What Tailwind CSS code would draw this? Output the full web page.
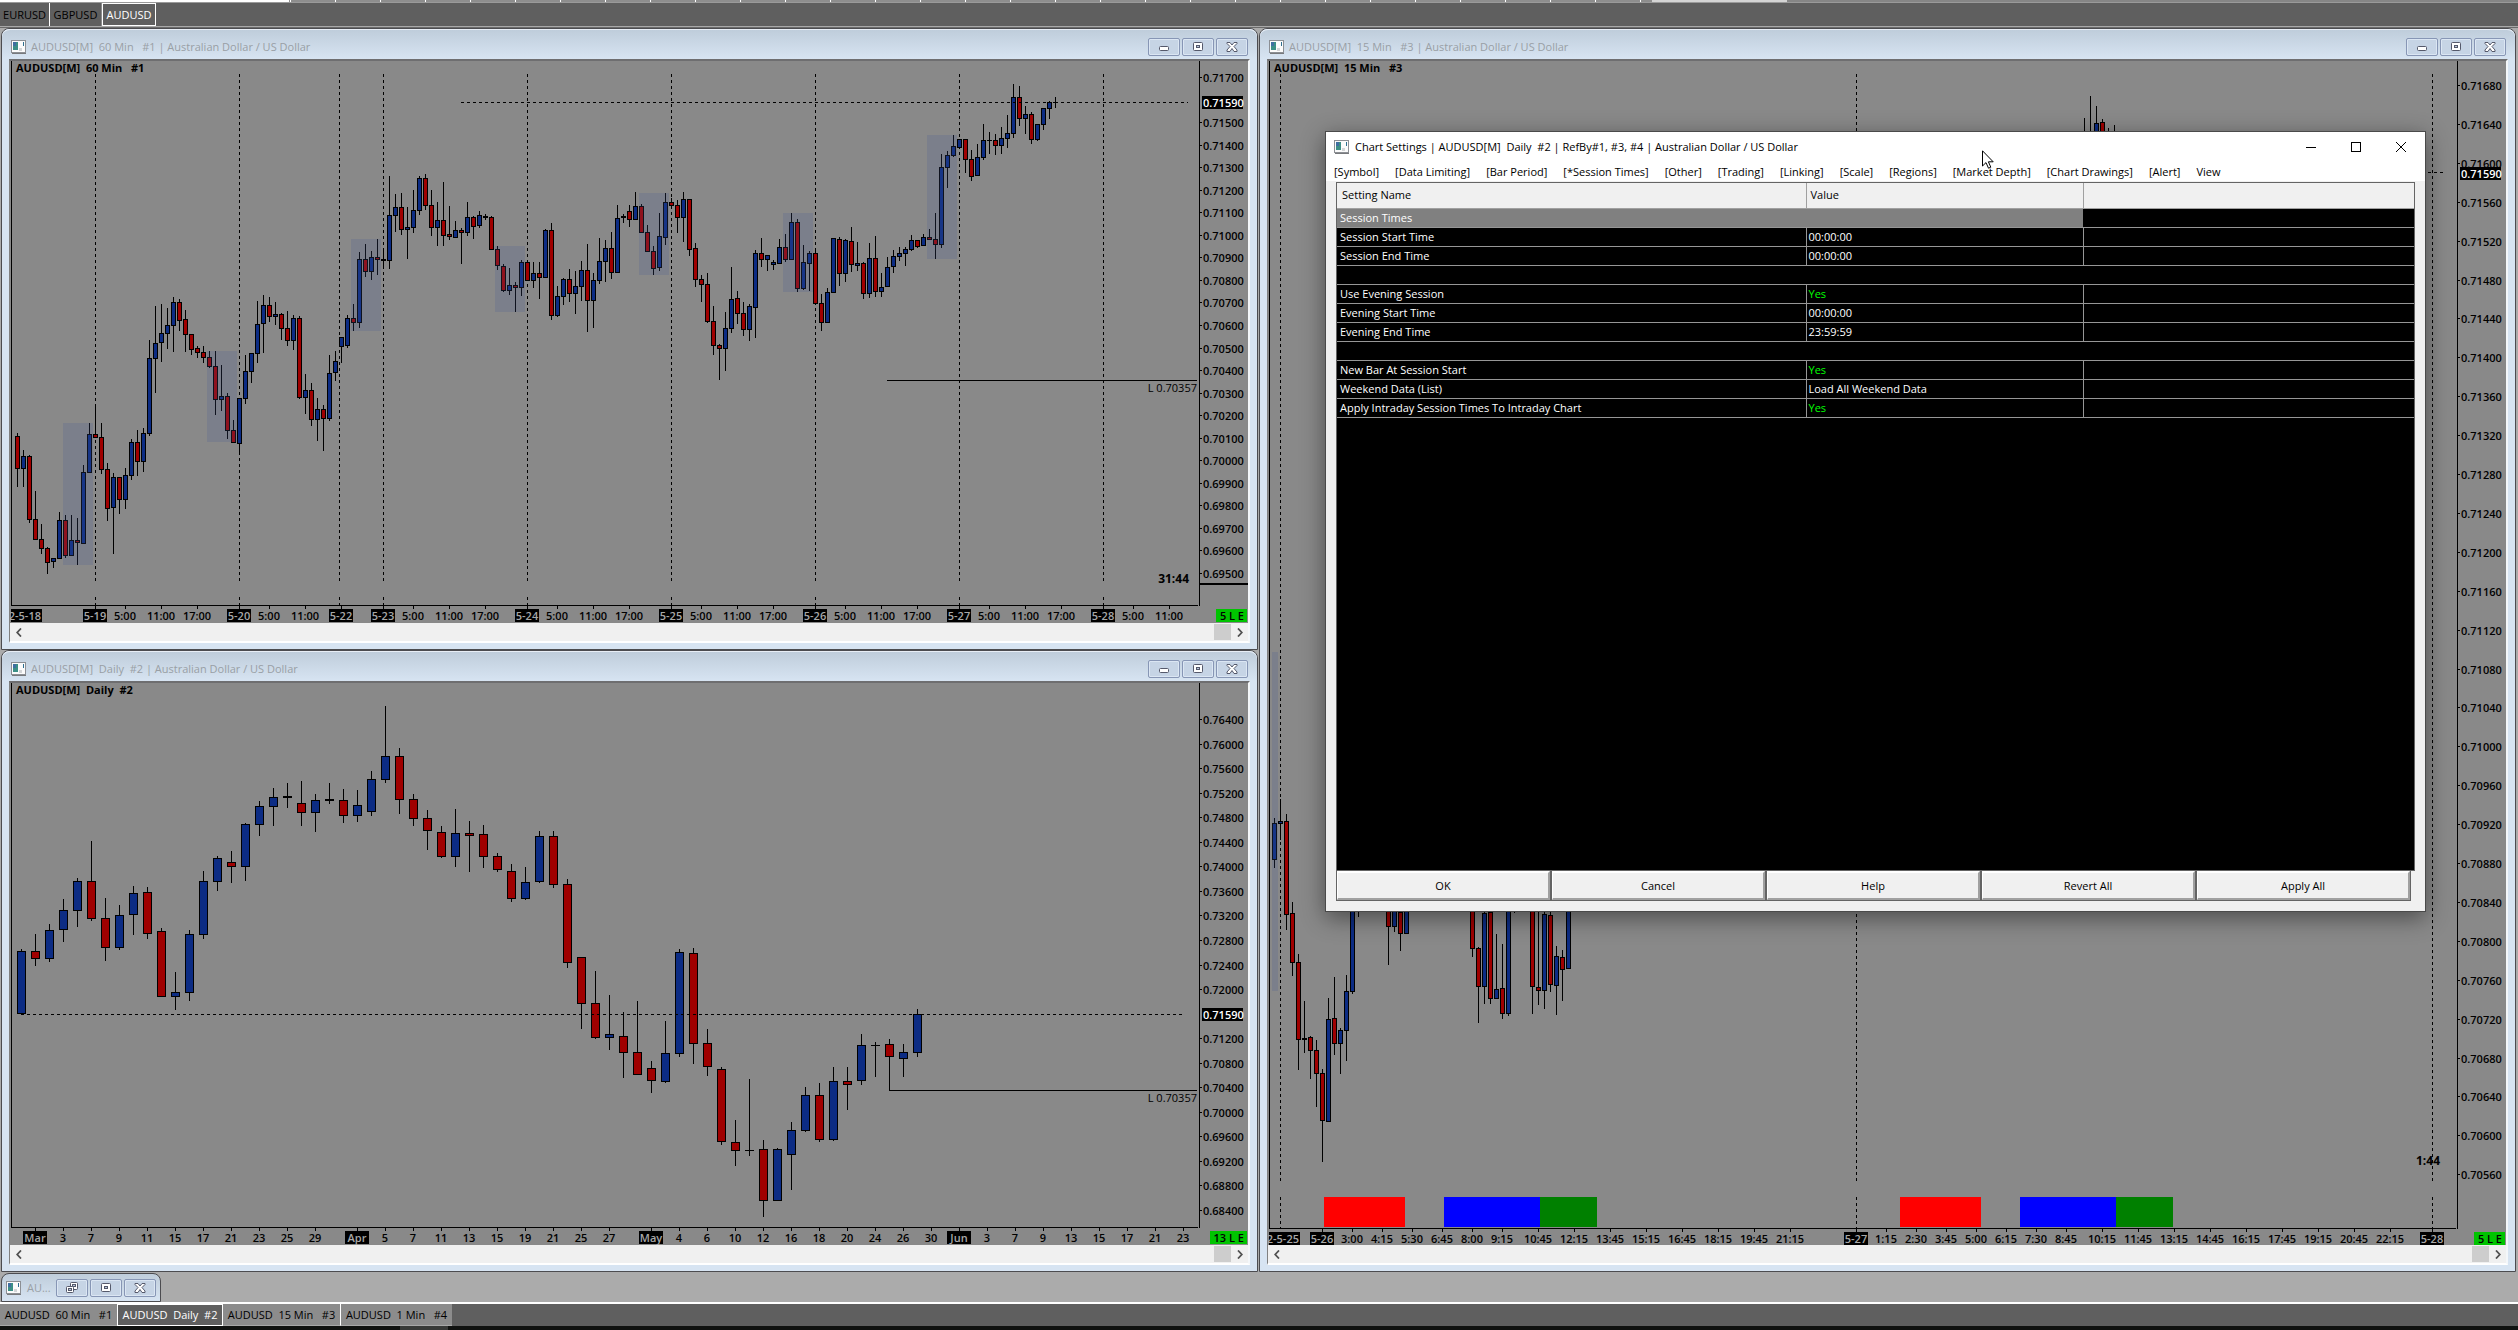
<!DOCTYPE html>
<html lang="en">
<head>
<meta charset="utf-8">
<title>AUDUSD charts</title>
<script src="https://cdn.jsdelivr.net/npm/@tailwindcss/browser@4"></script>
</head>
<body class="relative flex h-screen flex-col overflow-hidden bg-[#ababab] font-['Open_Sans','Noto_Sans',sans-serif] text-[11px] leading-4 text-black">

<svg class="hidden" aria-hidden="true">
  <symbol id="app" viewBox="0 0 15 14">
    <rect x="0.5" y="0.5" width="14" height="12" fill="#fbfbfb" stroke="#8c8f94"/>
    <rect x="1" y="13" width="14" height="1" fill="#77797c"/>
    <rect x="2" y="2" width="5" height="8" fill="#3c8f86"/><rect x="2" y="2" width="3" height="4" fill="#3f6fa0"/>
    <rect x="8" y="8" width="3" height="3" fill="#d4d6d8"/><rect x="12" y="2" width="1" height="4" fill="#2f6f90"/>
  </symbol>
  <symbol id="min" viewBox="0 0 12 10"><rect x="1.5" y="4.5" width="9" height="4" rx="1" fill="#fff" stroke="#55596b"/></symbol>
  <symbol id="max" viewBox="0 0 12 10"><rect x="1.5" y="0.5" width="9" height="8" rx="1" fill="#fff" stroke="#55596b"/><rect x="4.5" y="3.5" width="3" height="2" fill="#b8c6dc" stroke="#55596b"/></symbol>
  <symbol id="restore" viewBox="0 0 12 12"><rect x="4.5" y="0.5" width="7" height="7" rx="1" fill="#fff" stroke="#55596b"/><rect x="6.5" y="2.5" width="3" height="2" fill="#b8c6dc" stroke="#55596b"/><rect x="0.5" y="4.5" width="7" height="6" rx="1" fill="#fff" stroke="#55596b"/><rect x="2.5" y="6.5" width="3" height="2" fill="#b8c6dc" stroke="#55596b"/></symbol>
  <symbol id="close" viewBox="0 0 12 10"><path d="M1 .5H4L6 3L8 .5H11V1.5L8 4.5L11 8V9.5H8L6 6.5L4 9.5H1V8L4 4.5L1 1.5Z" fill="#fff" stroke="#55596b"/></symbol>
  <symbol id="left" viewBox="0 0 6 9"><path d="M5 .5L1.2 4.5L5 8.5" fill="none" stroke="#505050" stroke-width="1.8"/></symbol>
  <symbol id="right" viewBox="0 0 6 9"><path d="M1 .5L4.8 4.5L1 8.5" fill="none" stroke="#505050" stroke-width="1.8"/></symbol>
</svg>

<div class="flex h-[3px] shrink-0 border-b border-[#9a9a9a] bg-[#868686]">
  <div class="w-[289px] bg-white"></div>
  <div class="w-[1363px] bg-[repeating-linear-gradient(90deg,#8e8e8e_0_1px,#fff_1px_2px,#8e8e8e_2px_45px)]"></div>
  <div class="w-[135px] bg-[#d4d4d4]"></div>
</div>

<nav class="flex h-[23px] shrink-0 items-stretch bg-[#5f5f5f]" aria-label="Workspaces">
  <button class="w-[50px] border-r border-white">EURUSD</button>
  <button class="w-[52px] border-r border-[#8c8c8c]">GBPUSD</button>
  <button class="w-[54px] border border-white text-white">AUDUSD</button>
</nav>
<div class="h-0.5 shrink-0 border-t border-[#a8a8a8] bg-[#6a6a6a]"></div>

<main class="grid min-h-0 flex-1 grid-cols-2 gap-px pr-0.5 pb-[30px] pl-px">
  <div class="flex min-h-0 min-w-0 flex-col">
    <section class="win flex min-h-0 flex-1 flex-col rounded-t-lg border border-[#4c4c50] bg-[#d7e4f2]" data-chart="h1" data-title="AUDUSD[M]  60 Min   #1"></section>
    <section class="win flex min-h-0 flex-1 flex-col rounded-t-lg border border-[#4c4c50] bg-[#d7e4f2]" data-chart="d1" data-title="AUDUSD[M]  Daily  #2"></section>
  </div>
  <section class="win flex min-h-0 min-w-0 flex-col rounded-t-lg border border-[#4c4c50] bg-[#d7e4f2]" data-chart="m15" data-title="AUDUSD[M]  15 Min   #3"></section>
</main>

<template id="window">
  <header class="flex h-[30px] shrink-0 items-center rounded-t-lg border-t border-[#e8eef6] bg-linear-to-b from-[#bfcddb] to-[#d7e4f2] pt-1 pr-[9px] pl-[9px]">
    <svg class="h-3.5 w-[15px] shrink-0"><use href="#app"/></svg>
    <h2 class="title ml-[5px] flex-1 whitespace-pre text-[#999fa5]"></h2>
    <div class="flex gap-0.5">
      <button aria-label="Minimize" class="flex h-[18px] w-8 items-center justify-center rounded-xs border border-[#8796b5] bg-[#c6d4e5] inset-ring inset-ring-[#dbe6f3]"><svg class="h-2.5 w-3"><use href="#min"/></svg></button>
      <button aria-label="Maximize" class="flex h-[18px] w-8 items-center justify-center rounded-xs border border-[#8796b5] bg-[#c6d4e5] inset-ring inset-ring-[#dbe6f3]"><svg class="h-2.5 w-3"><use href="#max"/></svg></button>
      <button aria-label="Close" class="flex h-[18px] w-8 items-center justify-center rounded-xs border border-[#8796b5] bg-[#c6d4e5] inset-ring inset-ring-[#dbe6f3]"><svg class="h-2.5 w-3"><use href="#close"/></svg></button>
    </div>
  </header>
  <div class="mr-[7px] mb-1.5 ml-[7px] flex min-h-0 flex-1 flex-col border-t-2 border-r-2 border-b-2 border-l border-t-[#6e6e70] border-r-[#f4f7fa] border-b-white border-l-[#808080]">
    <div class="flex min-h-0 flex-1 bg-[#898989]">
      <svg class="plot h-full min-w-0 flex-1" shape-rendering="crispEdges" role="img"></svg>
      <svg class="prices h-full w-[50px] shrink-0" shape-rendering="crispEdges"></svg>
    </div>
    <div class="flex h-[18px] shrink-0 items-center bg-[#f0f0f0] pr-[5px] pl-1.5">
      <button aria-label="Scroll left"><svg class="h-[9px] w-1.5"><use href="#left"/></svg></button>
      <div class="ml-auto h-4 w-[17px] bg-[#cdcdcd]"></div>
      <button aria-label="Scroll right" class="ml-1.5"><svg class="h-[9px] w-1.5"><use href="#right"/></svg></button>
    </div>
  </div>
</template>

<!-- minimized window -->
<div class="absolute bottom-7 left-px flex h-[29px] w-40 items-center rounded-t-lg border border-[#4c4c50] bg-linear-to-b from-[#bfcddb] to-[#d7e4f2] pr-1 pl-1">
  <svg class="h-3.5 w-[15px] shrink-0"><use href="#app"/></svg>
  <span class="ml-1.5 flex-1 text-[#999fa5]">AU...</span>
  <div class="flex gap-0.5">
    <button aria-label="Restore" class="flex h-[18px] w-8 items-center justify-center rounded-xs border border-[#8796b5] bg-[#c6d4e5] inset-ring inset-ring-[#dbe6f3]"><svg class="h-3 w-3"><use href="#restore"/></svg></button>
    <button aria-label="Maximize" class="flex h-[18px] w-8 items-center justify-center rounded-xs border border-[#8796b5] bg-[#c6d4e5] inset-ring inset-ring-[#dbe6f3]"><svg class="h-2.5 w-3"><use href="#max"/></svg></button>
    <button aria-label="Close" class="flex h-[18px] w-8 items-center justify-center rounded-xs border border-[#8796b5] bg-[#c6d4e5] inset-ring inset-ring-[#dbe6f3]"><svg class="h-2.5 w-3"><use href="#close"/></svg></button>
  </div>
</div>

<nav class="flex h-6 shrink-0 items-stretch border-t-2 border-white bg-[#5f5f5f]" aria-label="Charts">
  <button class="w-[117px] border-b border-[#a8a8a8] bg-[#8c8c8c] whitespace-pre">AUDUSD  60 Min   #1</button>
  <button class="w-[106px] border border-white whitespace-pre text-white">AUDUSD  Daily  #2</button>
  <button class="w-[117px] border-b border-[#a8a8a8] bg-[#8c8c8c] whitespace-pre">AUDUSD  15 Min   #3</button>
  <button class="w-28 border-b border-l border-b-[#a8a8a8] border-l-white bg-[#8c8c8c] whitespace-pre">AUDUSD  1 Min   #4</button>
</nav>
<div class="h-1 shrink-0 bg-[#101210]"><div class="ml-[400px] h-full w-12 bg-[#383a38]"></div></div>

<!-- settings dialog -->
<div role="dialog" aria-labelledby="dlg" class="absolute top-[131px] right-[92px] left-[1325px] flex h-[781px] flex-col border border-[#4a4a4a] bg-[#f0f0f0] shadow-[0_6px_22px_rgba(0,0,0,0.45)]">
  <div class="flex h-[30px] shrink-0 items-center bg-white pr-0.5 pl-2">
    <svg class="h-3.5 w-[15px]"><use href="#app"/></svg>
    <h1 id="dlg" class="ml-1.5 flex-1 whitespace-pre">Chart Settings | AUDUSD[M]  Daily  #2 | RefBy#1, #3, #4 | Australian Dollar / US Dollar</h1>
    <button aria-label="Minimize" class="flex h-full w-[45px] items-center justify-center"><svg class="h-3 w-3" viewBox="0 0 12 12"><path d="M1 6.5H11" stroke="#000"/></svg></button>
    <button aria-label="Maximize" class="flex h-full w-[45px] items-center justify-center"><svg class="h-3 w-3" viewBox="0 0 12 12"><rect x="1.5" y="1.5" width="9" height="9" fill="none" stroke="#000"/></svg></button>
    <button aria-label="Close" class="flex h-full w-[45px] items-center justify-center"><svg class="h-3 w-3" viewBox="0 0 12 12"><path d="M1 1L11 11M11 1L1 11" stroke="#000"/></svg></button>
  </div>
  <nav class="flex h-[19px] shrink-0 items-center gap-4 bg-white pl-2 whitespace-nowrap" aria-label="Settings pages">
    <a href="#">[Symbol]</a><a href="#">[Data Limiting]</a><a href="#">[Bar Period]</a><a href="#">[*Session Times]</a><a href="#">[Other]</a><a href="#">[Trading]</a><a href="#">[Linking]</a><a href="#">[Scale]</a><a href="#">[Regions]</a><a href="#">[Market Depth]</a><a href="#">[Chart Drawings]</a><a href="#">[Alert]</a><a href="#">View</a>
  </nav>
  <div class="mt-px mr-2.5 ml-2.5 min-h-0 flex-1 border border-[#646464] bg-black">
    <table class="w-full table-fixed border-collapse text-left text-white">
      <colgroup><col class="w-[469px]"><col class="w-[277px]"><col></colgroup>
      <thead><tr class="h-[25px] border-b border-[#a0a0a0] bg-[#f0f0f0] text-black"><th class="border-r border-[#a0a0a0] pl-[5px] font-normal">Setting Name</th><th class="border-r border-[#a0a0a0] pl-1 font-normal">Value</th><th></th></tr></thead>
      <tbody>
        <tr class="h-[19px] border-b border-[#969696]"><td colspan="2" class="bg-[#808080] pl-[3px]">Session Times</td><td></td></tr>
        <tr class="h-[19px] border-b border-[#969696]"><td class="border-r border-[#969696] pl-[3px]">Session Start Time</td><td class="border-r border-[#969696] pl-0.5">00:00:00</td><td></td></tr>
        <tr class="h-[19px] border-b border-[#969696]"><td class="border-r border-[#969696] pl-[3px]">Session End Time</td><td class="border-r border-[#969696] pl-0.5">00:00:00</td><td></td></tr>
        <tr class="h-[19px] border-b border-[#969696]"><td colspan="3"></td></tr>
        <tr class="h-[19px] border-b border-[#969696]"><td class="border-r border-[#969696] pl-[3px]">Use Evening Session</td><td class="border-r border-[#969696] pl-0.5 text-[#00ff00]">Yes</td><td></td></tr>
        <tr class="h-[19px] border-b border-[#969696]"><td class="border-r border-[#969696] pl-[3px]">Evening Start Time</td><td class="border-r border-[#969696] pl-0.5">00:00:00</td><td></td></tr>
        <tr class="h-[19px] border-b border-[#969696]"><td class="border-r border-[#969696] pl-[3px]">Evening End Time</td><td class="border-r border-[#969696] pl-0.5">23:59:59</td><td></td></tr>
        <tr class="h-[19px] border-b border-[#969696]"><td colspan="3"></td></tr>
        <tr class="h-[19px] border-b border-[#969696]"><td class="border-r border-[#969696] pl-[3px]">New Bar At Session Start</td><td class="border-r border-[#969696] pl-0.5 text-[#00ff00]">Yes</td><td></td></tr>
        <tr class="h-[19px] border-b border-[#969696]"><td class="border-r border-[#969696] pl-[3px]">Weekend Data (List)</td><td class="border-r border-[#969696] pl-0.5">Load All Weekend Data</td><td></td></tr>
        <tr class="h-[19px] border-b border-[#969696]"><td class="border-r border-[#969696] pl-[3px]">Apply Intraday Session Times To Intraday Chart</td><td class="border-r border-[#969696] pl-0.5 text-[#00ff00]">Yes</td><td></td></tr>
      </tbody>
    </table>
  </div>
  <div class="mr-3.5 mb-2.5 ml-2.5 grid h-[30px] shrink-0 grid-cols-5 gap-0.5 border border-t-0 border-[#646464] bg-[#646464]">
    <button class="border border-t-2 border-r-2 border-b-2 border-t-white border-r-[#a0a0a0] border-b-[#a0a0a0] border-l-white bg-[#f0f0f0]">OK</button>
    <button class="border border-t-2 border-r-2 border-b-2 border-t-white border-r-[#a0a0a0] border-b-[#a0a0a0] border-l-white bg-[#f0f0f0]">Cancel</button>
    <button class="border border-t-2 border-r-2 border-b-2 border-t-white border-r-[#a0a0a0] border-b-[#a0a0a0] border-l-white bg-[#f0f0f0]">Help</button>
    <button class="border border-t-2 border-r-2 border-b-2 border-t-white border-r-[#a0a0a0] border-b-[#a0a0a0] border-l-white bg-[#f0f0f0]">Revert All</button>
    <button class="border border-t-2 border-r-2 border-b-2 border-t-white border-r-[#a0a0a0] border-b-[#a0a0a0] border-l-white bg-[#f0f0f0]">Apply All</button>
  </div>
</div>

<!-- pointer -->
<svg class="absolute top-[150px] left-[1982px] h-[19px] w-3" viewBox="0 0 12 19" aria-hidden="true"><path d="M.5 .8V16L4 12.6L6.5 18.2L8.8 17.2L6.4 11.8H11.2Z" fill="#fff" stroke="#000"/></svg>

<script>
// Bars are "high top bottom low colour"; B = up, R = down, D = doji.
const bars = {
h1: `1299 1308 1406 1460 R,1350 1368 1406 1460 B,1365 1368 1559 1568 R,1473 1557 1619 1619 R,1572 1617 1646 1661 R,1641 1644 1688 1721 R,1674 1674 1685 1703 B,1536 1560 1676 1676 B,1546 1560 1667 1673 R,1546 1620 1667 1667 B,1554 1620 1628 1695 R,1395 1416 1631 1631 B,1269 1302 1418 1418 B,1212 1302 1313 1313 R,1269 1311 1409 1421 R,1389 1407 1526 1562 R,1419 1431 1523 1661 B,1431 1431 1499 1541 R,1404 1425 1499 1526 B,1317 1326 1427 1439 B,1290 1326 1385 1427 R,1284 1299 1385 1415 B,1020 1074 1301 1307 B,917 1029 1076 1178 B,912 999 1028 1085 B,924 975 1001 1046 B,891 905 977 1055 B,897 906 962 993 R,930 957 1004 1055 R,1002 1002 1049 1064 R,1038 1044 1058 1073 R,1038 1056 1073 1088 R,1053 1071 1100 1103 R,1053 1098 1199 1244 R,1095 1188 1199 1232 B,1179 1188 1292 1316 R,1260 1290 1328 1328 R,1194 1194 1331 1364 B,1065 1113 1196 1211 B,1059 1059 1115 1148 B,903 972 1061 1088 B,885 915 973 1058 B,891 915 950 965 R,906 942 950 974 B,938 942 986 1019 R,932 984 1022 1037 R,945 954 1022 1049 B,947 954 1193 1196 R,1122 1170 1193 1241 B,1149 1170 1259 1277 R,1194 1227 1259 1322 B,1215 1227 1256 1352 R,1065 1119 1256 1262 B,1053 1083 1118 1142 B,1011 1011 1040 1088 B,945 954 1037 1043 B,912 954 968 992 R,756 777 969 983 B,732 777 815 830 R,753 771 815 839 B,717 771 779 825 R,744 777 782 806 D,528 645 782 806 B,581 621 647 695 B,579 621 689 705 R,621 681 689 776 B,570 630 684 698 B,528 534 632 645 B,522 534 617 630 R,570 615 684 707 R,606 660 684 738 B,546 660 708 738 R,618 702 711 719 R,663 690 713 713 B,683 690 698 791 R,606 651 698 707 B,648 651 681 716 R,633 645 678 684 B,642 648 653 659 D,648 651 749 749 R,738 747 797 809 R,792 798 873 875 R,804 855 872 884 B,846 855 863 935 R,780 786 863 887 B,786 786 842 843 R,786 819 842 863 B,786 819 833 896 R,687 690 833 834 B,669 690 948 959 R,858 888 948 951 B,834 837 890 914 B,807 837 881 906 R,813 858 881 941 B,783 810 860 902 B,732 810 902 996 R,819 840 902 983 B,714 783 842 851 B,720 744 785 845 B,696 744 818 836 R,615 654 818 818 B,642 648 653 668 D,615 633 659 681 R,576 618 659 659 B,612 618 698 698 R,675 696 755 755 R,738 753 806 825 R,639 708 803 812 B,579 606 713 735 B,594 606 617 617 R,600 615 654 698 R,576 597 654 725 B,597 597 749 768 R,729 744 839 860 R,825 837 854 906 R,819 852 965 968 R,918 963 1037 1064 R,1032 1035 1046 1140 R,936 984 1046 1112 B,801 897 987 999 B,873 894 942 972 R,906 939 989 1007 R,912 918 989 1022 B,750 759 923 1013 B,714 759 779 800 R,765 765 779 812 B,780 786 794 809 B,717 741 792 792 B,702 741 779 785 R,639 666 779 780 B,657 666 866 875 R,735 786 866 869 B,753 759 792 872 B,744 759 911 911 R,882 909 968 992 R,864 876 968 968 B,714 714 878 878 B,711 717 822 857 R,717 720 822 845 B,681 723 794 815 R,726 789 797 812 B,786 789 881 896 R,729 774 881 893 B,708 774 875 890 R,819 861 875 890 B,771 801 860 860 B,750 768 800 818 B,741 759 770 782 B,741 747 762 797 B,705 720 749 752 B,720 720 740 743 R,702 711 738 738 B,687 711 719 719 R,639 717 734 776 R,462 501 734 743 B,453 465 503 563 B,405 438 467 471 B,417 417 443 443 B,417 417 479 518 R,450 477 530 542 R,432 471 527 527 B,372 420 473 479 B,396 420 423 462 D,402 420 437 464 R,381 414 437 461 B,345 399 416 443 B,252 291 401 413 B,258 291 356 377 R,318 342 356 401 B,336 342 419 431 R,372 372 419 422 B,324 324 374 389 B,303 306 326 356 B,291 306 309 324 D`,
d1: `897 903 1091 1091 B,852 903 926 948 R,822 840 926 936 B,747 780 839 876 B,684 693 782 831 B,573 693 806 812 R,744 804 893 933 R,765 795 893 900 B,708 729 794 855 B,711 726 851 866 R,834 843 1040 1040 R,966 1026 1040 1079 B,840 852 1028 1053 B,663 693 854 867 B,618 624 695 723 B,603 636 650 699 R,519 522 650 693 B,453 468 524 558 B,414 441 470 528 B,399 438 443 474 D,393 459 488 528 R,432 450 488 546 B,399 447 452 461 D,417 450 497 519 R,420 465 497 516 B,363 387 485 498 B,168 318 389 399 B,294 318 449 492 R,432 447 506 528 R,480 504 542 600 R,528 546 620 624 R,477 549 620 651 B,513 549 557 666 R,525 552 620 654 R,609 618 659 666 R,642 663 746 755 R,651 696 746 750 B,543 558 695 699 B,543 558 704 714 R,687 702 938 954 R,921 921 1061 1137 R,963 1059 1163 1167 R,1035 1152 1163 1200 B,1086 1158 1208 1284 R,1053 1207 1274 1274 R,1233 1254 1292 1329 R,1113 1209 1296 1298 B,897 906 1211 1221 B,894 909 1181 1242 R,1137 1179 1250 1278 R,1251 1257 1475 1485 R,1410 1476 1502 1548 R,1287 1500 1503 1518 D,1470 1497 1652 1700 R,1494 1497 1652 1652 B,1416 1440 1514 1620 B,1311 1335 1442 1446 B,1298 1335 1469 1475 R,1251 1293 1469 1473 B,1251 1293 1304 1380 R,1152 1185 1292 1305 B,1176 1185 1188 1281 D,1167 1182 1220 1321 R,1182 1206 1226 1281 B,1077 1092 1208 1220 B`,
m15: `818 823 860 868 B,799 821 824 840 B,814 821 915 930 R,902 913 963 976 R,954 962 1040 1070 R,1001 1038 1040 1053 D,1036 1037 1051 1079 R,1040 1050 1074 1107 R,1069 1073 1121 1162 R,998 1019 1122 1122 B,977 1018 1044 1055 R,1028 1030 1044 1074 B,975 991 1031 1061 B,880 890 992 994 B,870 890 892 917 D,,,,,880 890 927 965 R,880 890 927 932 B,880 912 934 951 R,880 890 934 934 B,,,,,,,,,,,880 890 949 957 R,947 948 987 1023 R,880 913 987 1004 B,880 912 999 1004 R,934 989 999 999 B,944 988 1014 1019 R,880 890 1014 1016 B,870 890 892 913 D,,,880 890 987 1014 R,880 987 991 1005 R,880 914 991 1009 B,880 915 985 992 R,946 956 986 1015 B,950 957 970 1001 R,880 890 969 969 B,${','.repeat(85)}118 140 142 150 D,96 140 142 150 D,106 123 150 150 B,119 122 150 150 R,128 140 142 150 D,125 140 142 150 D`
};
const run = (start, step, text) => text.split(' ').map((t, i) => [start + step * i, t]);
const charts = {
  h1: { x0: 10, y0: 61, px: 1198, first: 17, step: 6, body: 5, base: 0, unit: 3, axis: 605, cut: '2-5-18', badge: '5 L E', badgeW: 31,
    shade: [[63,423,30,142],[207,351,30,91],[351,239,30,92],[495,246,30,66],[639,193,30,82],[783,213,30,79],[927,135,30,124]],
    blocks: [], vert: [95,239,339,383,527,671,815,959,1103], vEnd: 581, vTail: 597,
    last: [461,1188,102], low: [887,380], clock: ['31:44',1189,583],
    days: [[95,'5-19'],[239,'5-20'],[341,'5-22'],[383,'5-23'],[527,'5-24'],[671,'5-25'],[815,'5-26'],[959,'5-27'],[1103,'5-28']],
    times: [[125,'5:00'],[161,'11:00'],[197,'17:00'],[269,'5:00'],[305,'11:00'],...run(413,36,'5:00 11:00 17:00'),...run(557,36,'5:00 11:00 17:00'),...run(701,36,'5:00 11:00 17:00'),...run(845,36,'5:00 11:00 17:00'),...run(989,36,'5:00 11:00 17:00'),...run(1133,36,'5:00 11:00')],
    price: [71700, 100, 23, 78, 22.545, [1]], mark: 102, split: 584 },
  d1: { x0: 10, y0: 683, px: 1198, first: 21, step: 14, body: 9, base: 650, unit: 3, axis: 1227, badge: '13 L E', badgeW: 37,
    shade: [], blocks: [], vert: [], last: [21,1182,1014], low: [889,1090],
    days: [[35,'Mar'],[357,'Apr'],[651,'May'],[959,'Jun']],
    times: [...run(63,28,'3 7 9 11 15 17 21 23 25 29'),...run(385,28,'5 7 11 13 15 19 21 25 27'),...run(679,28,'4 6 10 12 16 18 20 24 26 30'),...run(987,28,'3 7 9 13 15 17 21 23')],
    price: [76400, 400, 21, 720, 24.55, [12]], mark: 1014 },
  m15: { x0: 1268, y0: 61, px: 2456, first: 1274, step: 6, body: 5, base: 0, unit: 1, axis: 1228, cut: '2-5-25', badge: '5 L E', badgeW: 31,
    shade: [[1272,652,6,339]],
    blocks: [[1324,81,'#ff0000'],[1444,96,'#0000ff'],[1540,57,'#008000'],[1900,81,'#ff0000'],[2020,96,'#0000ff'],[2116,57,'#008000']],
    vert: [1280,1856,2432], vEnd: 1181, vTail: 1197, last: [2080,2445,172], clock: ['1:44',2440,1165],
    days: [[1322,'5-26'],[1856,'5-27'],[2432,'5-28']],
    times: [...run(1352,30,'3:00 4:15 5:30 6:45 8:00 9:15'),...run(1538,36,'10:45 12:15 13:45 15:15 16:45 18:15 19:45 21:15'),...run(1886,30,'1:15 2:30 3:45 5:00 6:15 7:30 8:45'),...run(2102,36,'10:15 11:45 13:15 14:45 16:15 17:45 19:15 20:45 22:15')],
    price: [71680, 40, 29, 86, 38.9, []], mark: 173 }
};
const NS = 'http://www.w3.org/2000/svg';
const el = (parent, tag, attrs, text) => {
  const n = document.createElementNS(NS, tag);
  for (const k in attrs) n.setAttribute(k, attrs[k]);
  if (text) n.textContent = text;
  return parent.appendChild(n);
};
const line = (g, x1, y1, x2, y2, extra) => el(g, 'line', { x1, y1, x2, y2, stroke: '#000', ...extra });
const rect = (g, x, y, width, height, fill, extra) => el(g, 'rect', { x, y, width, height, fill, ...extra });

document.querySelectorAll('.win').forEach(win => {
  win.append(document.getElementById('window').content.cloneNode(true));
  const c = charts[win.dataset.chart];
  win.querySelector('.title').textContent = win.dataset.title + ' | Australian Dollar / US Dollar';
  const plot = win.querySelector('.plot');
  plot.setAttribute('aria-label', win.dataset.title);
  const g = el(plot, 'g', { transform: `translate(${-c.x0} ${-c.y0})` });
  const right = c.px + 1;

  c.vert.forEach(x => {
    line(g, x + .5, 74, x + .5, c.vEnd, { 'stroke-dasharray': '3 3' });
    line(g, x + .5, c.vTail, x + .5, c.axis, { 'stroke-dasharray': '3 3' });
  });
  bars[win.dataset.chart].split(',').forEach((row, i) => {
    if (!row) return;
    const [h, t, b, l, k] = row.split(' ').map((v, j) => j < 4 ? c.base + Math.round(v / c.unit) : v);
    const x = c.first + c.step * i + .5, half = (c.body - 1) / 2;
    line(g, x, h, x, l);
    if (k === 'D') rect(g, x - half - .5, t, c.body, Math.max(1, b - t), '#000');
    else rect(g, x - half, t + .5, c.body - 1, Math.max(1, b - t - 1), k === 'B' ? '#0c2c84' : '#a00000', { stroke: '#000' });
  });
  c.shade.forEach(([x, y, w, h]) => rect(g, x, y, w, h, '#485898', { 'fill-opacity': .2 }));
  c.blocks.forEach(([x, w, fill]) => rect(g, x, 1197, w, 30, fill));
  line(g, c.last[0], c.last[2] + .5, c.last[1], c.last[2] + .5, { 'stroke-dasharray': '3 3' });
  if (c.low) {
    line(g, c.low[0], c.low[1] + .5, right - 2, c.low[1] + .5);
    el(g, 'text', { x: right - 2, y: c.low[1] + 12, 'text-anchor': 'end', class: 'text-[11px]' }, 'L 0.70357');
  }
  if (c.clock) el(g, 'text', { x: c.clock[1], y: c.clock[2], 'text-anchor': 'end', class: 'text-xs font-bold' }, c.clock[0]);
  el(g, 'text', { x: c.x0 + 6, y: c.y0 + 11, class: 'text-[11px] font-bold whitespace-pre' }, win.dataset.title);
  line(g, c.x0 + 1.5, c.y0, c.x0 + 1.5, c.axis);
  line(g, c.x0 + 1, c.axis + .5, right, c.axis + .5);

  const ty = c.axis + 15;
  c.times.forEach(([x, t]) => {
    line(g, x + .5, c.axis, x + .5, c.axis + 4);
    el(g, 'text', { x, y: ty, 'text-anchor': 'middle', class: 'text-[11px] font-semibold' }, t);
  });
  c.days.forEach(([x, t]) => {
    line(g, x + .5, c.axis, x + .5, c.axis + 4);
    rect(g, x - 12, c.axis + 4, 24, 13, '#000');
    el(g, 'text', { x, y: ty, 'text-anchor': 'middle', fill: '#a8a8a8', class: 'text-[11px] font-semibold' }, t);
  });
  if (c.cut) {
    rect(g, c.x0 + 1, c.axis + 4, 31, 13, '#000');
    el(g, 'text', { x: c.x0 + 31, y: ty, 'text-anchor': 'end', fill: '#a8a8a8', class: 'text-[11px] font-semibold' }, c.cut);
  }

  const p = el(win.querySelector('.prices'), 'g', { transform: `translate(0 ${-c.y0})` });
  line(p, 1.5, c.y0, 1.5, c.axis + 1);
  const [from, dec, n, top, gap, skip] = c.price;
  for (let i = 0; i < n; i++) {
    if (skip.includes(i)) continue;
    const y = Math.round(top + gap * i);
    line(p, 1, y - .5, 4, y - .5);
    el(p, 'text', { x: 5, y: y + 4, class: 'text-[11px] font-semibold' }, ((from - dec * i) / 1e5).toFixed(5));
  }
  rect(p, 4, c.mark - 6, 41, 13, '#000');
  el(p, 'text', { x: 5, y: c.mark + 5, fill: '#fff', class: 'text-[11px] font-semibold' }, '0.71590');
  if (c.split) rect(p, 1, c.split - 1, 49, 2, '#000');
  rect(p, 49 - c.badgeW, c.axis + 4, c.badgeW, 13, '#00c400');
  el(p, 'text', { x: 46, y: ty, 'text-anchor': 'end', class: 'text-[11px] font-semibold' }, c.badge);
});
</script>
</body>
</html>
